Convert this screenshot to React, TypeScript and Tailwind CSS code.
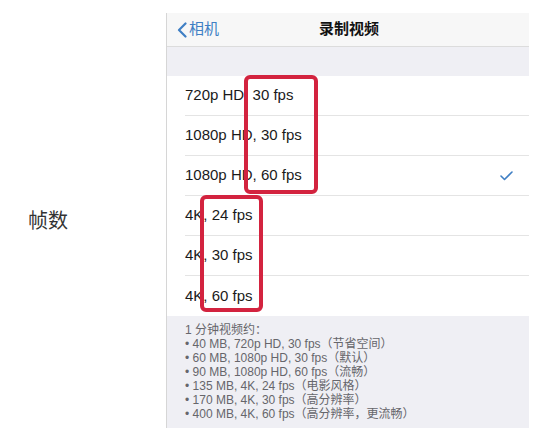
const rows = [
  { label: "720p HD, 30 fps", checked: false },
  { label: "1080p HD, 30 fps", checked: false },
  { label: "1080p HD, 60 fps", checked: true },
  { label: "4K, 24 fps", checked: false },
  { label: "4K, 30 fps", checked: false },
  { label: "4K, 60 fps", checked: false },
];

const notes = [
  "1 分钟视频约：",
  "• 40 MB, 720p HD, 30 fps（节省空间）",
  "• 60 MB, 1080p HD, 30 fps（默认）",
  "• 90 MB, 1080p HD, 60 fps（流畅）",
  "• 135 MB, 4K, 24 fps（电影风格）",
  "• 170 MB, 4K, 30 fps（高分辨率）",
  "• 400 MB, 4K, 60 fps（高分辨率，更流畅）",
];

function Check() {
  return (
    <svg width="13" height="10" viewBox="0 0 13 10" fill="none">
      <polyline points="1,5 4.5,8.5 12,1" stroke="#3f7fc4" strokeWidth="1.6" strokeLinecap="round" strokeLinejoin="round" />
    </svg>
  );
}

export default function App() {
  return (
    <div
      className="flex h-[436px] w-[540px] bg-white pt-[13px] pb-[8px]"
      style={{ fontFamily: '"Liberation Sans", "Noto Sans CJK SC", sans-serif' }}
    >
      <div className="flex w-[166px] items-center pl-[28px]">
        <span className="text-[20px] text-[#333]">帧数</span>
      </div>

      <div className="relative flex w-[363px] flex-col border-l border-[#d6d6d6]">
        {/* nav bar */}
        <div className="relative flex h-[34px] items-center border-b border-[#dcdcdc] bg-[#f7f7f7]">
          <div className="flex items-center gap-[2px] pl-[10px] text-[#3f7fc4]">
            <svg width="10" height="16" viewBox="0 0 10 16" fill="none">
              <polyline points="8.5,1.5 2,8 8.5,14.5" stroke="#3f7fc4" strokeWidth="2.2" strokeLinecap="round" strokeLinejoin="round" />
            </svg>
            <span className="text-[15px]">相机</span>
          </div>
          <span className="absolute left-[152px] text-[15px] font-bold text-[#111]">录制视频</span>
        </div>

        <div className="h-[29px] bg-[#efeff4]" />

        <div className="flex flex-col bg-white">
          {rows.map((r, i) => (
            <div key={r.label} className="pl-[18px]">
              <div
                className={
                  "flex h-[40px] items-center justify-between pr-[16px] " +
                  (i < rows.length - 1 ? "border-b border-[#e4e4e4]" : "")
                }
              >
                <span className="text-[15px] text-[#1a1a1a]">{r.label}</span>
                {r.checked ? <Check /> : null}
              </div>
            </div>
          ))}
        </div>

        <div className="flex-1 bg-[#efeff4] pt-[7px] pl-[18px]">
          {notes.map((n) => (
            <p key={n} className="text-[12px] leading-[14px] text-[#66666b]">
              {n}
            </p>
          ))}
        </div>

        {/* annotation boxes */}
        <div className="absolute left-[77px] top-[62px] h-[119px] w-[74px] rounded-[6px] border-[4px] border-[#d3233f]" />
        <div className="absolute left-[33px] top-[182px] h-[117px] w-[63px] rounded-[6px] border-[4px] border-[#d3233f]" />
      </div>
    </div>
  );
}
